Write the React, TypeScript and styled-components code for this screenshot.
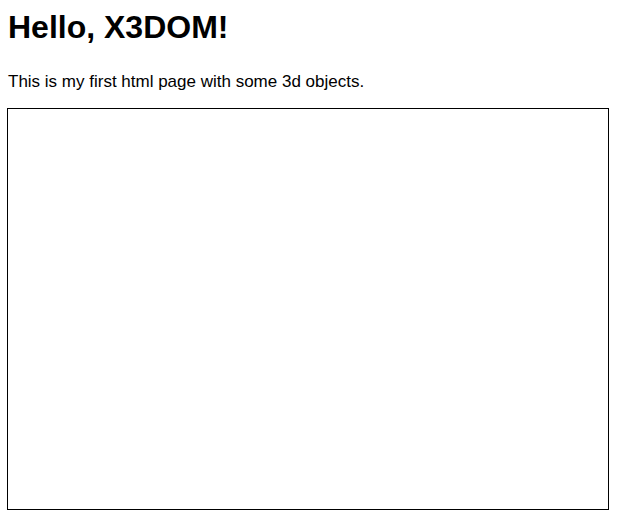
import React from "react";
import styled, { createGlobalStyle } from "styled-components";

const GlobalStyle = createGlobalStyle`
  html, body {
    margin: 0;
    padding: 0;
    background: #ffffff;
  }
  body {
    font-family: "Liberation Sans", Arial, Helvetica, sans-serif;
    color: #000000;
  }
`;

const Page = styled.div`
  display: flex;
  flex-direction: column;
  padding: 0 8px 8px 7px;
`;

const Title = styled.h1`
  margin: 9px 0 0 1px;
  font-size: 32px;
  line-height: 37px;
  font-weight: bold;
`;

const Intro = styled.p`
  margin: 26px 0 0 1px;
  font-size: 17px;
  line-height: 20px;
`;

const Scene = styled.div`
  margin-top: 16px;
  width: 600px;
  height: 400px;
  border: 1px solid #000000;
  background: #ffffff;
`;

export default function App() {
  return (
    <>
      <GlobalStyle />
      <Page>
        <Title>Hello, X3DOM!</Title>
        <Intro>This is my first html page with some 3d objects.</Intro>
        <Scene />
      </Page>
    </>
  );
}
